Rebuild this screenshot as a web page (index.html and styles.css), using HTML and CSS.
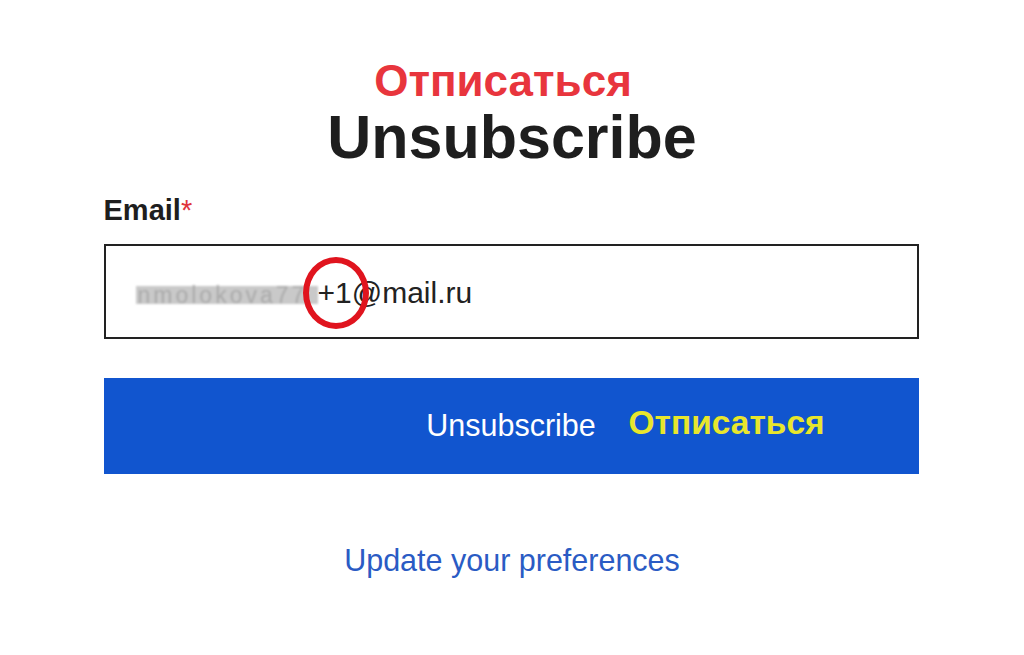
FILE: index.html
```html
<!DOCTYPE html>
<html lang="en">
<head>
<meta charset="utf-8">
<title>Unsubscribe</title>
<link rel="stylesheet" href="styles.css">
</head>
<body>
<main class="page">
  <div class="note-top">Отписаться</div>
  <h1 class="title">Unsubscribe</h1>
  <form class="form">
    <label class="label">Email<span class="req">*</span></label>
    <div class="input">
      <span class="blur">nmolokova77</span><span class="mark">+1</span>@mail.ru
    </div>
    <button type="button" class="btn">Unsubscribe<span class="note-btn">Отписаться</span></button>
  </form>
  <a class="link" href="#">Update your preferences</a>
</main>
</body>
</html>
```

FILE: styles.css
```css
* { box-sizing: border-box; }
html, body { margin: 0; padding: 0; background: #fff; }
body { font-family: "Liberation Sans", Arial, sans-serif; width: 1024px; height: 655px; overflow: hidden; }
.page { display: flex; flex-direction: column; align-items: center; padding-top: 57px; }
.note-top { color: #e8353d; font-weight: 700; font-size: 44px; line-height: 48px; margin-left: -18px; }
.title { margin: 0; color: #1e1e1e; font-weight: 700; font-size: 61px; line-height: 66px; margin-top: -1px; }
.form { width: 815px; margin-left: -2px; display: flex; flex-direction: column; margin-top: 24px; }
.label { font-weight: 700; font-size: 29px; line-height: 32px; color: #1e1e1e; }
.req { color: #e0353d; font-weight: 400; }
.input { margin-top: 18px; height: 95px; border: 2px solid #222; display: flex; align-items: center; padding-left: 30px; font-size: 30px; color: #222; padding-top: 2px; }
.blur { color: #aaa; background: #c9c9c9; filter: blur(1.2px); font-size: 23px; line-height: 18px; height: 18px; display: inline-block; width: 182px; letter-spacing: 3px; padding-left: 2px; margin-top: 4px; }
.mark { position: relative; }
.mark::after { content: ""; position: absolute; left: -15px; top: -19px; width: 66px; height: 72px; border: 6px solid #e0141e; border-radius: 50%; box-sizing: border-box; }
.btn { position: relative; margin-top: 39px; height: 96px; border: 0; background: #1155cf; color: #fff; font-family: "Liberation Sans", Arial, sans-serif; font-size: 30.5px; padding: 0; padding-bottom: 2px; }
.note-btn { position: absolute; left: 525px; top: 26px; color: #e8e62c; font-weight: 700; font-size: 33.5px; }
.link { margin-top: 69px; color: #2a5bc4; font-size: 30.5px; text-decoration: none; }
```
